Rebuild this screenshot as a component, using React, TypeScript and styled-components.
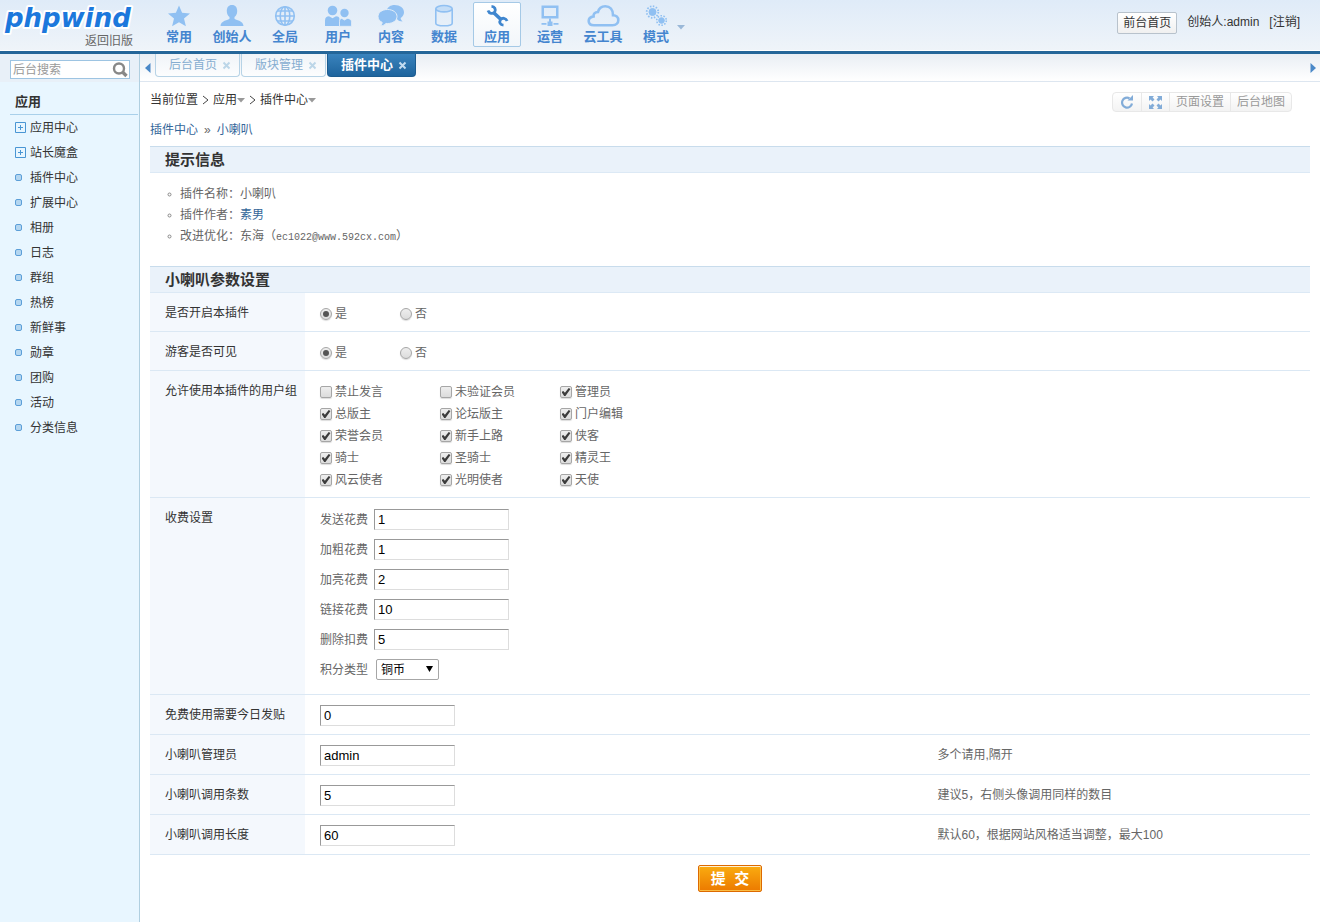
import React from "react";
import styled, { createGlobalStyle, css } from "styled-components";

const Global = createGlobalStyle`
  * { box-sizing: border-box; }
  html, body, #root { height: 100%; }
  body {
    margin: 0;
    background: #fff;
    color: #333;
    font: 12px/18px "Liberation Sans", "Noto Sans CJK SC", sans-serif;
  }
  a { color: inherit; text-decoration: none; }
  ul { list-style: none; margin: 0; padding: 0; }
  button, input, select { font: inherit; color: inherit; margin: 0; }
  button { cursor: pointer; padding: 0; border: 0; background: none; }
`;

const Page = styled.div`
  min-height: 100%;
  display: flex;
  flex-direction: column;
`;

const Header = styled.header`
  height: 54px;
  flex: none;
  display: flex;
  align-items: flex-start;
  background: linear-gradient(#dfebf8, #eff4f9);
  border-bottom: 3px solid #256699;
  box-shadow: inset 0 -1px 0 #fff;
`;

const Brand = styled.div`
  width: 155px;
  flex: none;
  display: flex;
  flex-direction: column;
  align-items: flex-start;
`;

const Logo = styled.svg`
  display: block;
  width: 136px;
  height: 34px;
  overflow: visible;
`;

const OldVersion = styled.a`
  width: 133px;
  text-align: right;
  color: #666;
  line-height: 14px;
`;

const MainNav = styled.nav`
  display: flex;
  gap: 5px;
  padding-top: 2px;
`;

const NavItem = styled.a<{ $active?: boolean }>`
  width: 48px;
  height: 45px;
  display: flex;
  flex-direction: column;
  align-items: center;
  border: 1px solid transparent;
  border-radius: 2px;
  color: #4485cf;
  font-size: 13px;
  font-weight: bold;
  line-height: 18px;
  white-space: nowrap;
  ${(p) =>
    p.$active &&
    css`
      border-color: #a5c9e6;
      background: linear-gradient(#fff, #f2f6fa);
    `}
  svg {
    display: block;
    flex: none;
    margin: 2px 0 1px;
  }
`;

const MoreButton = styled.button`
  width: 8px;
  height: 5px;
  margin-top: 25px;
  margin-left: -3px;
  svg { display: block; }
`;

const UserArea = styled.div`
  margin-left: auto;
  padding: 12px 20px 0 0;
  display: flex;
  align-items: flex-start;
  gap: 10px;
  line-height: 20px;
  white-space: nowrap;
`;

const FrontLink = styled.a`
  height: 22px;
  padding: 0 5px;
  border: 1px solid #b8c2cc;
  border-radius: 2px;
  background: linear-gradient(#fff, #f0f0f0);
`;

const Body = styled.div`
  flex: 1;
  display: flex;
`;

const Sidebar = styled.aside`
  width: 140px;
  flex: none;
  border-right: 1px solid #b0cfe0;
  background: #e8f6ff;
`;

const SearchBar = styled.form`
  height: 28px;
  padding: 6px 9px 0 10px;
  background: #e8f0f8;
`;

const SearchBox = styled.div`
  height: 19px;
  display: flex;
  align-items: center;
  border: 1px solid #9dc4e2;
  background: #fff;
`;

const SearchInput = styled.input`
  flex: 1;
  min-width: 0;
  height: 17px;
  padding: 0 2px;
  border: 0;
  outline: 0;
  background: transparent;
  &::placeholder { color: #999; opacity: 1; }
`;

const SearchButton = styled.button`
  width: 17px;
  height: 17px;
  svg { display: block; }
`;

const MenuTitle = styled.h2`
  margin: 9px 1px 0 10px;
  padding-left: 5px;
  height: 24px;
  border-bottom: 1px solid #a9d0ea;
  font-size: 13px;
  line-height: 22px;
`;

const MenuLink = styled.a`
  height: 25px;
  padding-left: 15px;
  display: flex;
  align-items: center;
  gap: 4px;
`;

const MenuMark = styled.svg`
  display: block;
  width: 11px;
  height: 11px;
`;

const Main = styled.main`
  flex: 1;
  min-width: 0;
`;

const TabStrip = styled.div`
  height: 28px;
  display: flex;
  align-items: flex-start;
  padding: 0 4px 0 5px;
  border-bottom: 1px solid #dde6f0;
  background: linear-gradient(#e9eef4, #fff);
`;

const ScrollButton = styled.button`
  width: 6px;
  height: 28px;
  display: flex;
  align-items: center;
  &:last-child { margin-left: auto; }
`;

const Tabs = styled.div`
  display: flex;
  gap: 1px;
  padding-left: 4px;
`;

const Tab = styled.div<{ $active?: boolean }>`
  height: 23px;
  display: flex;
  align-items: center;
  gap: 5px;
  padding: 0 8px 0 13px;
  border: 1px solid #b7d3e6;
  border-top: 0;
  border-radius: 0 0 4px 4px;
  background: linear-gradient(#f0f4f8, #fcfdfe);
  color: #86add0;
  ${(p) =>
    p.$active &&
    css`
      border-color: #1c5c90;
      background: linear-gradient(#3a83bd, #1e649d);
      color: #fff;
      font-size: 13px;
      font-weight: bold;
    `}
`;

const CloseButton = styled.button<{ $active?: boolean }>`
  width: 9px;
  height: 9px;
  color: ${(p) => (p.$active ? "#c3dcf0" : "#bcd6e8")};
  svg { display: block; }
`;

const Content = styled.div`
  padding: 0 10px 30px;
`;

const TopLine = styled.div`
  display: flex;
  justify-content: space-between;
  align-items: flex-start;
  padding: 9px 18px 0 0;
`;

const Crumbs = styled.nav`
  display: flex;
  align-items: center;
  gap: 4px;
  svg { display: block; }
`;

const CrumbMenu = styled.button`
  display: flex;
  align-items: center;
`;

const ToolGroup = styled.div`
  display: flex;
  height: 20px;
  margin-top: 1px;
  border: 1px solid #e8e8e8;
  border-radius: 4px;
  background: linear-gradient(#fff, #f3f3f3);
  color: #999;
`;

const ToolButton = styled.button<{ $icon?: boolean }>`
  padding: 0 ${(p) => (p.$icon ? 7 : 6)}px;
  line-height: 18px;
  & + & { border-left: 1px solid #e8e8e8; }
  svg { display: block; }
`;

const PluginPath = styled.nav`
  display: flex;
  gap: 6px;
  margin: 9px 0 7px;
  color: #666;
  a { color: #336699; }
`;

const SectionTitle = styled.h2`
  margin: 0;
  height: 27px;
  padding-left: 15px;
  border-top: 1px solid #c8dcec;
  border-bottom: 1px solid #dce9f5;
  background: #eaf2fa;
  font-size: 15px;
  line-height: 25px;
`;

const InfoList = styled.ul`
  padding: 11px 15px 0;
  margin-bottom: 19px;
  color: #666;
  line-height: 21px;
  li {
    height: 21px;
    display: flex;
    align-items: center;
    gap: 8px;
    padding-left: 2px;
  }
  a { color: #336699; }
`;

const Mono = styled.span`
  font-family: "Liberation Mono", monospace;
  font-size: 10px;
`;

const Row = styled.div`
  display: grid;
  grid-template-columns: 155px minmax(0, 8fr) minmax(0, 5fr);
  border-bottom: 1px solid #dbe8f4;
`;

const RowLabel = styled.div`
  padding: 11px 0 9px 15px;
  background: #f4f8fd;
  white-space: nowrap;
`;

const RowContent = styled.div`
  padding: 10px 15px 6px;
  color: #666;
`;

const RowHint = styled.div`
  padding: 11px 14px 9px;
  color: #666;
`;

const Options = styled.div<{ $column: number }>`
  display: grid;
  grid-template-columns: repeat(3, ${(p) => p.$column}px);
`;

const Option = styled.label`
  height: 22px;
  display: flex;
  align-items: center;
  gap: 3px;
`;

const Choice = styled.input`
  appearance: none;
  width: 12px;
  height: 12px;
  display: grid;
  place-items: center;
  border: 1px solid #a6a6a6;
  border-radius: ${(p) => (p.type === "radio" ? "50%" : "2px")};
  background: linear-gradient(#eee, #dcdcdc);
  box-shadow: 0 1px 1px #ddd;
  &[type="radio"]:checked::after {
    content: "";
    width: 6px;
    height: 6px;
    border-radius: 50%;
    background: #555;
  }
  &[type="checkbox"]:checked::after {
    content: "";
    width: 9px;
    height: 8px;
    background: #3c3c3c;
    clip-path: polygon(0 50%, 20% 38%, 38% 60%, 80% 0, 100% 12%, 44% 100%, 30% 100%);
  }
`;

const Fees = styled.div`
  display: grid;
  row-gap: 7px;
  padding-bottom: 7px;
`;

const Fee = styled.div`
  height: 23px;
  display: flex;
  align-items: center;
  gap: 6px;
  label { width: 48px; }
`;

const Single = styled.div`
  height: 23px;
  display: flex;
  align-items: flex-start;
`;

const TextInput = styled.input`
  width: 135px;
  height: 21px;
  padding: 0 3px;
  border: 1px solid;
  border-color: #999 #ddd #ddd #999;
  outline: 0;
  background: #fff;
  color: #000;
  font-size: 13px;
`;

const SelectBox = styled.div`
  position: relative;
  width: 63px;
  margin-left: 2px;
  svg {
    position: absolute;
    right: 6px;
    top: 7px;
    pointer-events: none;
  }
`;

const Select = styled.select`
  appearance: none;
  display: block;
  width: 100%;
  height: 21px;
  padding: 2px 4px 0;
  border: 1px solid #a6a6a6;
  border-radius: 2px;
  background: #fff;
  color: #000;
  line-height: 17px;
`;

const SubmitBar = styled.div`
  display: flex;
  justify-content: center;
  padding-top: 10px;
`;

const SubmitButton = styled.button`
  width: 64px;
  height: 27px;
  border: 1px solid #dd6a00;
  border-radius: 2px;
  background: linear-gradient(#faac10, #ec7a00);
  box-shadow: inset 0 1px 0 #fff0d0, inset 0 0 0 1px #fbbd45;
  color: #fff;
  font-size: 15px;
  font-weight: bold;
  line-height: 25px;
  white-space: pre;
`;

const light = "#90c0f2";

const navIcons: Record<string, React.ReactNode> = {
  star: <path fill={light} d="M12 .500l3.100 7.300 7.900.6-6 5 1.900 7.800L12 17.200l-6.900 4 1.900-7.800-6-5 7.900-.6z" />,
  person: (
    <path fill={light} d="M12 0c3.600 0 5.200 2.600 5.200 6 0 2.700-1 4.800-2.700 6v1.800c1 1.500 9 1.700 9 7.200H.500c0-5.500 8-5.700 9-7.200V12C7.800 10.800 6.800 8.700 6.800 6 6.800 2.600 8.400 0 12 0z" />
  ),
  globe: (
    <g fill="none" stroke={light} strokeWidth="1.600">
      <circle cx="12" cy="11" r="9.300" />
      <ellipse cx="12" cy="11" rx="4.800" ry="9.300" />
      <path d="M12 1.500v19M3 11h18M4.500 6h15M4.500 16h15" />
    </g>
  ),
  users: (
    <g fill={light}>
      <circle cx="6.500" cy="5.500" r="4.800" />
      <path d="M-1 21v-5.500c0-3 1.800-4.300 4-4.300l3.500 2 3.500-2c2.500 0 3.500 1 3.500 3V21z" />
      <circle cx="18.500" cy="8" r="4.200" />
      <path d="M13.500 21.300v-5c0-1.800 1-2.900 2.300-2.900l2.700 1.600 2.700-1.600c2.500 0 4.300 1.200 4.300 3.500v4.400z" stroke="#e4eef8" strokeWidth=".8" />
    </g>
  ),
  chat: (
    <g fill={light}>
      <path d="M15.500 0C21 0 25 3 25 7.200c0 2.500-1.300 4.500-3.400 5.700.2 1.600 1 2.600 2 3.600-2.500 0-4.300-1-5.400-2.300L8 5C8.500 2.200 11.500 0 15.500 0z" />
      <path stroke="#e4eef8" d="M8.500 4.500c5.500 0 9.500 3 9.500 7s-4 7-9.500 7l-1.500-.1C5.700 20 4 20.700 1.500 20.800c1-1 1.600-2 1.700-3.400C.5 16.200-1 14-1 11.500c0-4 4-7 9.500-7z" />
    </g>
  ),
  database: (
    <g fill="none" stroke={light} strokeWidth="1.600">
      <ellipse cx="12" cy="3.700" rx="8.200" ry="3.200" fill="#c3ddf7" />
      <path d="M3.800 3.700v14.500c0 1.700 3.600 2.600 8.200 2.600s8.200-.9 8.200-2.600V3.700" />
    </g>
  ),
  wrench: (
    <g fill="none" stroke="#3f86cf" strokeWidth="2.800">
      <path d="M8.500 7.500l7.500 7" strokeWidth="3.600" />
      <path d="M6.500 1.300c3.200.2 4.700 3 3.200 5.700C7.800 9.200 4.200 8.800 3 5.500" />
      <path d="M18.500 20.200c-3.200-.2-4.700-2.900-3-5.500 1.800-2.200 5.400-1.900 6.600 1.300" />
    </g>
  ),
  monitor: (
    <g fill={light}>
      <path fillRule="evenodd" d="M3.500.500h17v13h-17zM6 3v8h12V3z" />
      <path d="M11 13.500h2v4h-2zM9.500 16.500h5v4.500h-5zM3.500 18h5v1.800h-5zM15.500 18h5v1.800h-5z" />
    </g>
  ),
  cloud: (
    <path fill="none" stroke={light} strokeWidth="2.600" d="M3 20.200h18.500c4 0 5.800-2.400 5.800-5 0-3-2.300-5-5.300-5C22 4.700 19 1.200 14.300 1.200c-4 0-6.500 2.400-7.300 5.800-3.300.2-4.700 2.200-4.400 4.400C-.8 12-2.300 13.700-2.300 16c0 2.400 2 4.200 5.300 4.200z" />
  ),
  gears: (
    <g fill={light} stroke={light}>
      <circle cx="8.500" cy="7" r="3.500" />
      <circle cx="8.500" cy="7" r="5.800" fill="none" strokeWidth="1.800" strokeDasharray="1.500 1.500" />
      <circle cx="17.500" cy="15.500" r="2.800" />
      <circle cx="17.500" cy="15.500" r="4.800" fill="none" strokeWidth="1.600" strokeDasharray="1.500 1.500" />
    </g>
  ),
};

const NavIcon = ({ name }: { name: string }) => (
  <svg width="24" height="22" viewBox="0 0 24 22" overflow="visible" aria-hidden="true">
    {navIcons[name]}
  </svg>
);

const Caret = ({ color = "#999" }: { color?: string }) => (
  <svg width="8" height="5" viewBox="0 0 8 5" aria-hidden="true">
    <path d="M0 0h8L4 4.500z" fill={color} />
  </svg>
);

const Arrow = ({ left }: { left?: boolean }) => (
  <svg width="6" height="10" viewBox="0 0 6 10" aria-hidden="true">
    <path d={left ? "M5.500 0v10L0 5z" : "M.5 0v10L6 5z"} fill="#4a88c8" />
  </svg>
);

const Chevron = () => (
  <svg width="7" height="10" viewBox="0 0 7 10" aria-hidden="true">
    <path d="M1 1l5 4-5 4" fill="none" stroke="#444" />
  </svg>
);

const Close = () => (
  <svg width="9" height="9" viewBox="0 0 9 9" aria-hidden="true">
    <path d="M1.500 1.500l6 6M7.500 1.500l-6 6" stroke="currentColor" strokeWidth="2" />
  </svg>
);

const nav = [
  ["常用", "star"],
  ["创始人", "person"],
  ["全局", "globe"],
  ["用户", "users"],
  ["内容", "chat"],
  ["数据", "database"],
  ["应用", "wrench"],
  ["运营", "monitor"],
  ["云工具", "cloud"],
  ["模式", "gears"],
];

const menu = ["应用中心", "站长魔盒", "插件中心", "扩展中心", "相册", "日志", "群组", "热榜", "新鲜事", "勋章", "团购", "活动", "分类信息"];

const tabs = ["后台首页", "版块管理", "插件中心"];

const groups = [
  "禁止发言", "未验证会员", "管理员",
  "总版主", "论坛版主", "门户编辑",
  "荣誉会员", "新手上路", "侠客",
  "骑士", "圣骑士", "精灵王",
  "风云使者", "光明使者", "天使",
];

const fees = [
  ["发送花费", "1"],
  ["加粗花费", "1"],
  ["加亮花费", "2"],
  ["链接花费", "10"],
  ["删除扣费", "5"],
];

const settings = [
  { label: "免费使用需要今日发贴", value: "0", hint: "" },
  { label: "小喇叭管理员", value: "admin", hint: "多个请用,隔开" },
  { label: "小喇叭调用条数", value: "5", hint: "建议5，右侧头像调用同样的数目" },
  { label: "小喇叭调用长度", value: "60", hint: "默认60，根据网站风格适当调整，最大100" },
];

const InfoDot = () => (
  <svg width="5" height="5" viewBox="0 0 5 5" aria-hidden="true">
    <circle cx="2.500" cy="2.500" r="1.500" fill="none" stroke="#888" />
  </svg>
);

const YesNo = ({ name, label }: { name: string; label: string }) => (
  <Row role="radiogroup" aria-label={label}>
    <RowLabel>{label}</RowLabel>
    <RowContent>
      <Options $column={80}>
        <Option>
          <Choice type="radio" name={name} defaultChecked />是
        </Option>
        <Option>
          <Choice type="radio" name={name} />否
        </Option>
      </Options>
    </RowContent>
  </Row>
);

export default function App() {
  return (
    <Page>
      <Global />
      <Header>
        <Brand>
          <Logo viewBox="0 0 136 34" role="img" aria-label="phpwind">
            <text
              x="5"
              y="27"
              fontFamily="DejaVu Sans"
              fontStyle="italic"
              fontWeight="bold"
              fontSize="26"
              fill="#1c78dc"
              stroke="#fff"
              strokeWidth="4"
              strokeLinejoin="round"
              paintOrder="stroke"
            >
              phpwind
            </text>
          </Logo>
          <OldVersion href="#">返回旧版</OldVersion>
        </Brand>
        <MainNav>
          {nav.map(([label, icon]) => (
            <NavItem key={label} href="#" $active={label === "应用"}>
              <NavIcon name={icon} />
              {label}
            </NavItem>
          ))}
        </MainNav>
        <MoreButton aria-label="更多">
          <Caret color="#9ab8d8" />
        </MoreButton>
        <UserArea>
          <FrontLink href="#">前台首页</FrontLink>
          <span>创始人:admin</span>
          <a href="#">[注销]</a>
        </UserArea>
      </Header>
      <Body>
        <Sidebar>
          <SearchBar>
            <SearchBox>
              <SearchInput placeholder="后台搜索" aria-label="后台搜索" />
              <SearchButton type="button" aria-label="搜索">
                <svg width="17" height="17" viewBox="0 0 17 17">
                  <circle cx="7" cy="7.500" r="5" fill="none" stroke="#888" strokeWidth="2.400" />
                  <path d="M10.500 11l4 4" stroke="#888" strokeWidth="3.400" />
                </svg>
              </SearchButton>
            </SearchBox>
          </SearchBar>
          <MenuTitle>应用</MenuTitle>
          <ul>
            {menu.map((label, i) => (
              <li key={label}>
                <MenuLink href="#">
                  <MenuMark viewBox="0 0 11 11" aria-hidden="true">
                    {i < 2 ? (
                      <path d="M.5.5h10v10H.5zM3 5.500h5M5.500 3v5" fill="none" stroke="#4a96d4" />
                    ) : (
                      <rect x=".5" y="2.500" width="6" height="6" rx="1.500" fill="#b4d6f0" stroke="#5c9fd8" />
                    )}
                  </MenuMark>
                  {label}
                </MenuLink>
              </li>
            ))}
          </ul>
        </Sidebar>
        <Main>
          <TabStrip>
            <ScrollButton aria-label="向左">
              <Arrow left />
            </ScrollButton>
            <Tabs>
              {tabs.map((label, i) => (
                <Tab key={label} $active={i === 2}>
                  <a href="#">{label}</a>
                  <CloseButton $active={i === 2} aria-label={"关闭" + label}>
                    <Close />
                  </CloseButton>
                </Tab>
              ))}
            </Tabs>
            <ScrollButton aria-label="向右">
              <Arrow />
            </ScrollButton>
          </TabStrip>
          <Content>
            <TopLine>
              <Crumbs>
                当前位置
                <Chevron />
                <CrumbMenu>应用<Caret /></CrumbMenu>
                <Chevron />
                <CrumbMenu>插件中心<Caret /></CrumbMenu>
              </Crumbs>
              <ToolGroup>
                <ToolButton $icon aria-label="刷新">
                  <svg width="14" height="14" viewBox="0 0 14 14">
                    <path d="M9.500 3.200A5 5 0 1 0 12 8.500" fill="none" stroke="#82acd8" strokeWidth="2.200" />
                    <path d="M7.500 5.500h5.500V0z" fill="#82acd8" />
                  </svg>
                </ToolButton>
                <ToolButton $icon aria-label="全屏">
                  <svg width="13" height="13" viewBox="0 0 13 13">
                    <path d="M0 0h5L3.600 1.500 5.500 3.500l-2 2-2-1.900L0 5zM13 0v5l-1.500-1.400-2 1.900-2-2 1.900-2L8 0zM0 13V8l1.500 1.400 2-1.900 2 2-1.900 2L5 13zM13 13H8l1.400-1.500-1.900-2 2-2 2 1.900L13 8z" fill="#82acd8" />
                  </svg>
                </ToolButton>
                <ToolButton>页面设置</ToolButton>
                <ToolButton>后台地图</ToolButton>
              </ToolGroup>
            </TopLine>
            <PluginPath>
              <a href="#">插件中心</a>
              <span>»</span>
              <a href="#">小喇叭</a>
            </PluginPath>
            <SectionTitle>提示信息</SectionTitle>
            <InfoList>
              <li><InfoDot /><span>插件名称：小喇叭</span></li>
              <li><InfoDot /><span>插件作者：<a href="#">素男</a></span></li>
              <li><InfoDot /><span>改进优化：东海（<Mono>ec1022@www.592cx.com</Mono>）</span></li>
            </InfoList>
            <form onSubmit={(e) => e.preventDefault()}>
              <SectionTitle>小喇叭参数设置</SectionTitle>
              <YesNo name="enabled" label="是否开启本插件" />
              <YesNo name="guest" label="游客是否可见" />
              <Row role="group" aria-label="允许使用本插件的用户组">
                <RowLabel>允许使用本插件的用户组</RowLabel>
                <RowContent>
                  <Options $column={120}>
                    {groups.map((label, i) => (
                      <Option key={label}>
                        <Choice type="checkbox" defaultChecked={i > 1} />
                        {label}
                      </Option>
                    ))}
                  </Options>
                </RowContent>
              </Row>
              <Row role="group" aria-label="收费设置">
                <RowLabel>收费设置</RowLabel>
                <RowContent>
                  <Fees>
                    {fees.map(([label, value], i) => (
                      <Fee key={label}>
                        <label htmlFor={"fee" + i}>{label}</label>
                        <TextInput id={"fee" + i} defaultValue={value} />
                      </Fee>
                    ))}
                    <Fee>
                      <label htmlFor="credit">积分类型</label>
                      <SelectBox>
                        <Select id="credit">
                          <option>铜币</option>
                        </Select>
                        <svg width="7" height="6" viewBox="0 0 7 6" aria-hidden="true">
                          <path d="M0 0h7L3.500 6z" fill="#000" />
                        </svg>
                      </SelectBox>
                    </Fee>
                  </Fees>
                </RowContent>
              </Row>
              {settings.map((s, i) => (
                <Row key={s.label}>
                  <RowLabel>
                    <label htmlFor={"setting" + i}>{s.label}</label>
                  </RowLabel>
                  <RowContent>
                    <Single>
                      <TextInput id={"setting" + i} defaultValue={s.value} />
                    </Single>
                  </RowContent>
                  <RowHint>{s.hint}</RowHint>
                </Row>
              ))}
              <SubmitBar>
                <SubmitButton type="submit">{"提  交"}</SubmitButton>
              </SubmitBar>
            </form>
          </Content>
        </Main>
      </Body>
    </Page>
  );
}
